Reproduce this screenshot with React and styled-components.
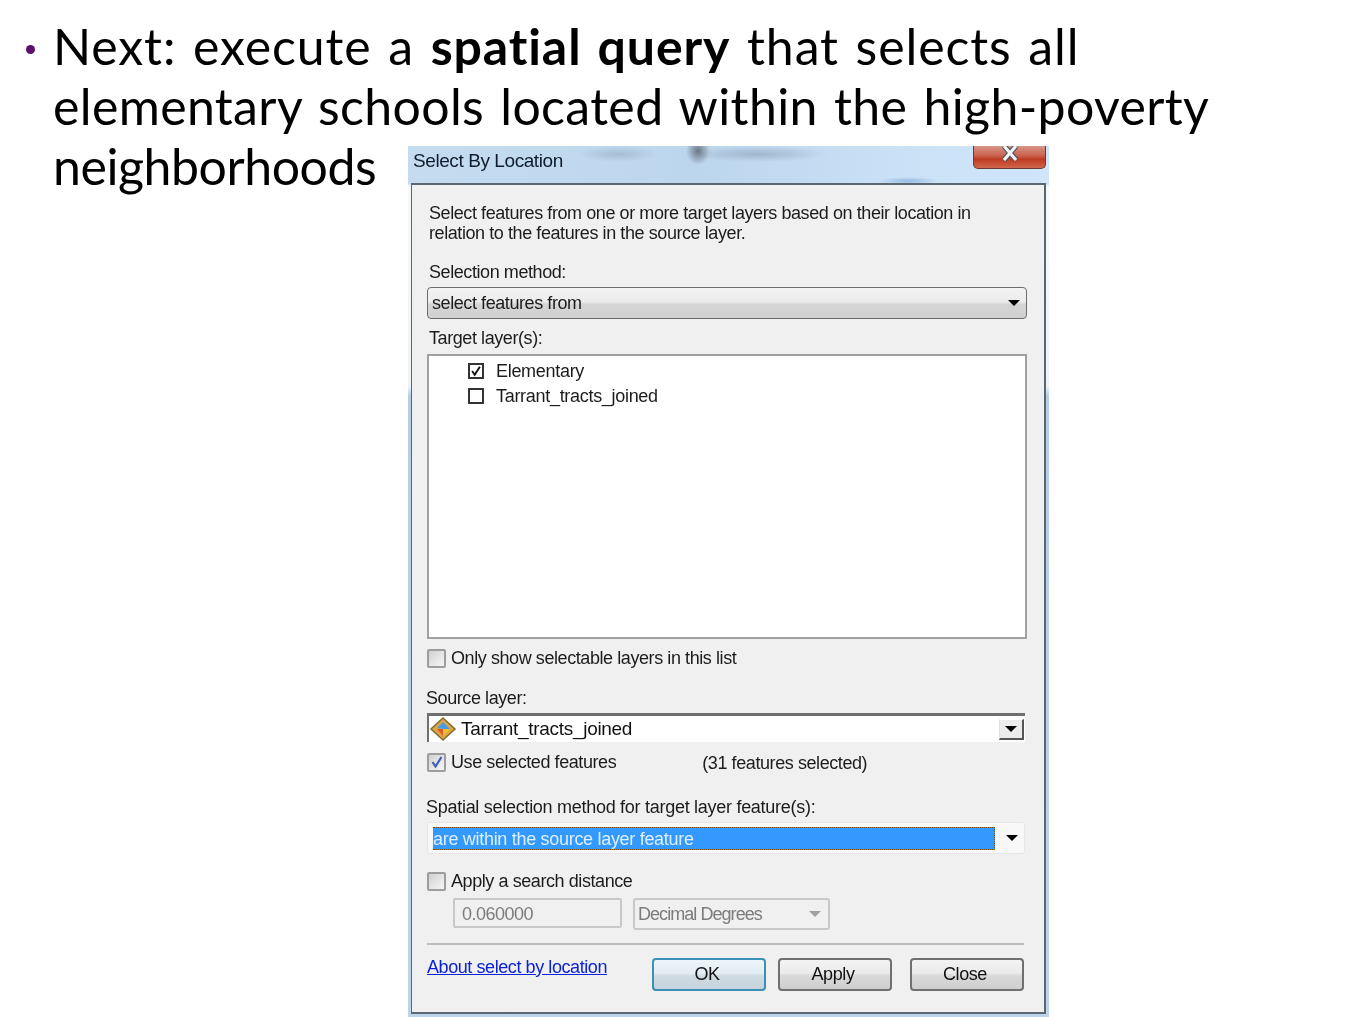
import React from "react";
import styled, { createGlobalStyle } from "styled-components";

const GlobalStyle = createGlobalStyle`
  html, body {
    margin: 0;
    padding: 0;
    background: #fff;
  }
`;

function ComboIcon() {
  return (
    <svg width="28" height="26" viewBox="0 0 28 26">
      <path d="M14 2 L26 13 L14 24 L2 13 Z" fill="#d8a94a" stroke="#8b6a2a" strokeWidth="1.5" />
      <path d="M14 6 L21 13 L14 13 L8 12 Z" fill="#4a9be0" />
      <path d="M8 13 L14 13 L14 20 Z" fill="#e8552a" />
      <path d="M14 13 L21 13 L14 20 Z" fill="#f2c230" />
    </svg>
  );
}

function Tick({ color }) {
  return (
    <svg width="14" height="14" viewBox="0 0 14 14">
      <path d="M2.5 7 L5.5 11.5 L11.5 2" fill="none" stroke={color} strokeWidth="2.2" />
    </svg>
  );
}

export default function App() {
  return (
    <Slide>
      <GlobalStyle />
      <Bullet>
        <Dot />
        <BulletText>
          <Line $spacing={0.9}>
            Next: execute a <b>spatial query</b> that selects all
          </Line>
          <Line $spacing={0.36}>elementary schools located within the high-poverty</Line>
          <Line $spacing={-0.44}>neighborhoods</Line>
        </BulletText>
      </Bullet>
      <Dialog>
        <TitleBar>
          <Title>Select By Location</Title>
          <CloseButton>
            <svg width="22" height="16" viewBox="0 0 22 16">
              <path d="M5 0 L17 14 M17 0 L5 14" stroke="#4a5560" strokeWidth="5.5" />
              <path d="M5 0 L17 14 M17 0 L5 14" stroke="#f4f4f4" strokeWidth="3.2" />
            </svg>
          </CloseButton>
        </TitleBar>
        <Body>
          <Description>
            Select features from one or more target layers based on their location in
            <br />
            relation to the features in the source layer.
          </Description>
          <Label $top={18}>Selection method:</Label>
          <GlassSelect>
            select features from
            <Arrow />
          </GlassSelect>
          <Label $top={8}>Target layer(s):</Label>
          <LayerList>
            <LayerRow>
              <ListCheck>
                <Tick color="#111" />
              </ListCheck>
              Elementary
            </LayerRow>
            <LayerRow>
              <ListCheck />
              Tarrant_tracts_joined
            </LayerRow>
          </LayerList>
          <CheckRow $top={9}>
            <SoftCheck />
            Only show selectable layers in this list
          </CheckRow>
          <Label $top={19} $left={-1}>Source layer:</Label>
          <SourceCombo>
            <ComboIcon />
            <SourceName>Tarrant_tracts_joined</SourceName>
            <ComboButton>
              <Arrow />
            </ComboButton>
          </SourceCombo>
          <SelectedRow>
            <CheckRow>
              <SoftCheck>
                <Tick color="#3f5fb5" />
              </SoftCheck>
              Use selected features
            </CheckRow>
            <SelectedCount>(31 features selected)</SelectedCount>
          </SelectedRow>
          <Label $top={24} $left={-1} $spacing={-0.28}>
            Spatial selection method for target layer feature(s):
          </Label>
          <SpatialSelect>
            <Highlight>are within the source layer feature</Highlight>
            <Arrow />
          </SpatialSelect>
          <CheckRow $top={17}>
            <SoftCheck />
            Apply a search distance
          </CheckRow>
          <DistanceRow>
            <DistanceInput>0.060000</DistanceInput>
            <UnitSelect>
              Decimal Degrees
              <Arrow $disabled />
            </UnitSelect>
          </DistanceRow>
          <Divider />
          <Footer>
            <HelpLink>About select by location</HelpLink>
            <Buttons>
              <DialogButton $primary $width={114} $gap={12}>OK</DialogButton>
              <DialogButton $width={114} $gap={18}>Apply</DialogButton>
              <DialogButton $width={114}>Close</DialogButton>
            </Buttons>
          </Footer>
        </Body>
      </Dialog>
    </Slide>
  );
}

const Slide = styled.main`
  position: relative;
  width: 1358px;
  height: 1017px;
  overflow: hidden;
  background: #fff;
`;

const Bullet = styled.section`
  display: flex;
  align-items: flex-start;
  padding: 16px 0 0 26px;
  width: 1240px;
`;

const Dot = styled.span`
  flex: none;
  width: 9px;
  height: 9px;
  margin: 29px 18px 0 0;
  border-radius: 50%;
  background: #5c0f6e;
`;

const BulletText = styled.div`
  font-family: "Lato", "Liberation Sans", sans-serif;
  font-size: 50px;
  line-height: 60px;
  word-spacing: 3px;
  color: #000;

  b {
    font-weight: 700;
  }
`;

const Line = styled.p`
  width: fit-content;
  margin: 0;
  white-space: nowrap;
  letter-spacing: ${(p) => p.$spacing}px;
`;

/* screenshot pasted on the slide, it overlaps the third text line box */
const Dialog = styled.div`
  position: absolute;
  left: 408px;
  top: 146px;
  width: 641px;
  height: 871px;
  box-sizing: border-box;
  padding: 0 3px 3px;
  background: linear-gradient(
    180deg,
    #c4dcf2 0,
    #bcd7f1 37px,
    #f6f9fc 40px,
    #eef3f8 240px,
    #b5cfe6 250px,
    #bcd5ea 100%
  );
  filter: blur(0.45px);
`;

const TitleBar = styled.header`
  position: relative;
  display: flex;
  align-items: center;
  height: 37px;
  margin: 0 -3px;
  padding: 0 0 7px 5px;
  box-sizing: border-box;
  background:
    radial-gradient(ellipse 12px 14px at 290px 5px, #6b7683 0, rgba(107, 118, 131, 0) 100%),
    radial-gradient(ellipse 70px 8px at 350px 8px, rgba(110, 130, 150, 0.4) 0, rgba(110, 130, 150, 0) 100%),
    radial-gradient(ellipse 40px 8px at 210px 8px, rgba(110, 130, 150, 0.3) 0, rgba(110, 130, 150, 0) 100%),
    radial-gradient(ellipse 30px 4px at 500px 35px, rgba(70, 130, 200, 0.4) 0, rgba(70, 130, 200, 0) 100%),
    linear-gradient(90deg, #c5dcf0 0, #bcd6ee 45%, #cde3f8 85%, #d0e5fa 100%);
`;

const Title = styled.h1`
  margin: 0;
  font-family: "Liberation Sans", sans-serif;
  font-size: 19px;
  font-weight: 400;
  letter-spacing: -0.42px;
  color: #101c2c;
`;

const CloseButton = styled.div`
  position: absolute;
  right: 3px;
  top: 0;
  display: flex;
  justify-content: center;
  width: 73px;
  height: 23px;
  box-sizing: border-box;
  border: 1px solid #6b3a36;
  border-top: none;
  border-radius: 0 0 5px 5px;
  background: linear-gradient(180deg, #d9968a 0, #c9604c 45%, #bd3a22 60%, #d0654a 100%);
`;

const Body = styled.div`
  display: flex;
  flex-direction: column;
  height: 831px;
  box-sizing: border-box;
  padding: 18px 17px 0 15px;
  border: 1px solid #5c6670;
  border-width: 2px 2px 2px 1px;
  background: #f0f0f0;
  font-family: "Liberation Sans", sans-serif;
  font-size: 18px;
  letter-spacing: -0.42px;
  color: #1c1c1c;
`;

const Description = styled.p`
  margin: 0 0 0 2px;
  line-height: 20px;
`;

const Label = styled.label`
  display: block;
  margin-top: ${(p) => p.$top || 0}px;
  margin-left: ${(p) => p.$left ?? 2}px;
  line-height: 22px;
  ${(p) => (p.$spacing ? `letter-spacing: ${p.$spacing}px;` : "")}
`;

const Arrow = styled.span`
  width: 0;
  height: 0;
  border-style: solid;
  border-width: 6px 6px 0;
  border-color: ${(p) => (p.$disabled ? "#a0a0a0" : "#000")} transparent transparent;
`;

const GlassSelect = styled.div`
  display: flex;
  align-items: center;
  justify-content: space-between;
  height: 32px;
  margin-top: 4px;
  padding: 0 6px 0 4px;
  box-sizing: border-box;
  border: 1px solid #6d6d6d;
  border-radius: 4px;
  background: linear-gradient(180deg, #f3f3f3 0, #ececec 45%, #d5d5d5 55%, #d0d0d0 100%);
`;

const LayerList = styled.div`
  display: flex;
  flex-direction: column;
  gap: 5px;
  height: 285px;
  margin-top: 5px;
  padding: 5px 0 0 39px;
  box-sizing: border-box;
  border: 2px solid #a0a0a0;
  background: #fff;
  letter-spacing: -0.3px;
`;

const LayerRow = styled.div`
  display: flex;
  align-items: center;
  gap: 12px;
  height: 20px;
`;

const ListCheck = styled.span`
  display: flex;
  align-items: center;
  justify-content: center;
  width: 16px;
  height: 16px;
  box-sizing: border-box;
  border: 2px solid #333;
  background: #fff;
`;

const CheckRow = styled.div`
  display: flex;
  align-items: center;
  gap: 5px;
  height: 20px;
  margin-top: ${(p) => p.$top || 0}px;
`;

const SoftCheck = styled.span`
  display: flex;
  flex: none;
  align-items: center;
  justify-content: center;
  width: 19px;
  height: 19px;
  box-sizing: border-box;
  border: 2px solid #9d9d9d;
  border-radius: 2px;
  background: linear-gradient(135deg, #d0d0d0 0, #e8e8e8 60%, #f4f4f4 100%);
`;

const SourceCombo = styled.div`
  position: relative;
  display: flex;
  align-items: center;
  gap: 4px;
  width: 598px;
  height: 29px;
  margin-top: 4px;
  box-sizing: border-box;
  border-top: 3px solid #6f6f6f;
  border-left: 2px solid #6f6f6f;
  background: #fff;
`;

const SourceName = styled.span`
  font-size: 19px;
  letter-spacing: -0.3px;
  color: #111;
`;

const ComboButton = styled.span`
  position: absolute;
  right: 1px;
  top: 3px;
  display: flex;
  align-items: center;
  justify-content: center;
  width: 25px;
  height: 21px;
  box-sizing: border-box;
  border: 1px solid;
  border-color: #fff #555 #555 #ddd;
  border-width: 1px 2px 2px 1px;
  background: #ececec;
`;

const SelectedRow = styled.div`
  display: flex;
  align-items: center;
  height: 20px;
  margin-top: 10px;
`;

const SelectedCount = styled.span`
  margin: 3px 0 0 86px;
`;

const SpatialSelect = styled.div`
  display: flex;
  align-items: center;
  justify-content: space-between;
  width: 598px;
  height: 32px;
  margin-top: 4px;
  padding: 0 6px 0 5px;
  box-sizing: border-box;
  border: 1px solid #e6e6e6;
  border-radius: 3px;
  background: #f8f8f8;
`;

const Highlight = styled.span`
  width: 562px;
  height: 23px;
  line-height: 22px;
  box-sizing: border-box;
  border-right: 1px dotted #7a4a10;
  border-bottom: 1px dotted #7a4a10;
  border-top: 1px dotted #7a4a10;
  background: #3399ff;
  letter-spacing: -0.3px;
  color: #dcefff;
`;

const DistanceRow = styled.div`
  display: flex;
  align-items: flex-start;
  gap: 11px;
  margin: 7px 0 0 26px;
  color: #7c7c7c;
`;

const DistanceInput = styled.div`
  width: 169px;
  height: 30px;
  padding-left: 7px;
  line-height: 28px;
  box-sizing: border-box;
  border: 2px solid #c8c8c8;
  border-radius: 2px;
  letter-spacing: -0.5px;
`;

const UnitSelect = styled.div`
  display: flex;
  align-items: center;
  justify-content: space-between;
  width: 197px;
  height: 32px;
  padding: 0 7px 0 3px;
  box-sizing: border-box;
  border: 2px solid #c8c8c8;
  border-radius: 3px;
  background: #f0f0f0;
  letter-spacing: -0.95px;
`;

const Divider = styled.hr`
  width: 597px;
  margin: 13px 0 0;
  border: none;
  height: 2px;
  background: #bdbdbd;
`;

const Footer = styled.footer`
  display: flex;
  justify-content: space-between;
  width: 597px;
  margin-top: 12px;
`;

const HelpLink = styled.a`
  line-height: 20px;
  color: #0a22d8;
  text-decoration: underline;
`;

const Buttons = styled.div`
  display: flex;
  margin-top: 1px;
`;

const DialogButton = styled.button`
  width: ${(p) => p.$width}px;
  height: 33px;
  margin-right: ${(p) => p.$gap || 0}px;
  padding: 0 4px 0 0;
  box-sizing: border-box;
  border: 2px solid ${(p) => (p.$primary ? "#3c90b8" : "#707070")};
  border-radius: 4px;
  background: ${(p) =>
    p.$primary
      ? "linear-gradient(180deg, #eef5f9 0, #e3edf3 45%, #cfdbe3 55%, #c6d3dc 100%)"
      : "linear-gradient(180deg, #f3f3f3 0, #ebebeb 45%, #d8d8d8 55%, #cfcfcf 100%)"};
  font: inherit;
  letter-spacing: inherit;
  color: #111;
`;
